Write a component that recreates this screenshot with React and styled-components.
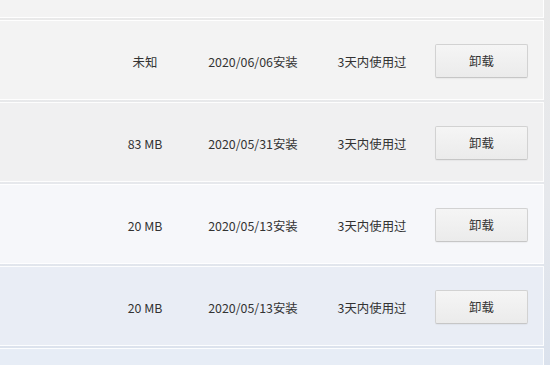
import React from 'react';
import styled, { createGlobalStyle } from 'styled-components';

const GlobalStyle = createGlobalStyle`
	html, body {
		margin: 0;
		padding: 0;
		height: 100%;
		overflow: hidden;
	}
	body {
		background: linear-gradient(to bottom, #e9e9e9 0%, #e6e8ec 55%, #dbe2ed 100%);
		font-family: "Microsoft YaHei", "Noto Sans CJK SC", "Noto Sans", sans-serif;
		font-size: 12.4px;
		color: #333;
	}
`;

const List = styled.div`
	width: 544px;
	height: 365px;
	margin-top: -62px;
	display: flex;
	flex-direction: column;
	gap: 2px;
`;

const Row = styled.div`
	box-sizing: border-box;
	flex: none;
	height: 80px;
	padding: 4px 0 0 100px;
	display: grid;
	grid-template-columns: 90px 126px 112px 93px;
	align-items: center;
	background: ${(p) => p.bg};
	border: 1px solid rgba(255, 255, 255, 0.85);
	border-left: none;
`;

const Cell = styled.div`
	text-align: center;
	white-space: nowrap;
	line-height: 16px;
`;

const UninstallButton = styled.button`
	box-sizing: border-box;
	width: 93px;
	height: 34px;
	margin-left: 7px;
	padding: 0;
	border: 1px solid #d2d2d2;
	border-bottom-color: #c6c6c6;
	border-radius: 2px;
	background: linear-gradient(to bottom, #f5f5f5, #ebebeb);
	box-shadow: 0 1px 1px rgba(0, 0, 0, 0.04);
	font-family: inherit;
	font-size: 12.4px;
	color: #333;
	cursor: pointer;
	transform: translateY(-1px);
`;

const apps = [
	{ size: '', date: '', used: '', bg: '#f3f3f3', empty: true },
	{ size: '未知', date: '2020/06/06安装', used: '3天内使用过', bg: '#f3f3f3' },
	{ size: '83 MB', date: '2020/05/31安装', used: '3天内使用过', bg: '#f0f0f1' },
	{ size: '20 MB', date: '2020/05/13安装', used: '3天内使用过', bg: '#f6f7fa' },
	{ size: '20 MB', date: '2020/05/13安装', used: '3天内使用过', bg: '#e9edf5' },
	{ size: '', date: '', used: '', bg: '#e7edf6', empty: true }
];

const App = () => (
	<>
		<GlobalStyle />
		<List>
			{apps.map((app, i) => (
				<Row key={i} bg={app.bg}>
					{app.empty ? null : (
						<>
							<Cell>{app.size}</Cell>
							<Cell>{app.date}</Cell>
							<Cell>{app.used}</Cell>
							<UninstallButton>卸载</UninstallButton>
						</>
					)}
				</Row>
			))}
		</List>
	</>
);

export default App;
